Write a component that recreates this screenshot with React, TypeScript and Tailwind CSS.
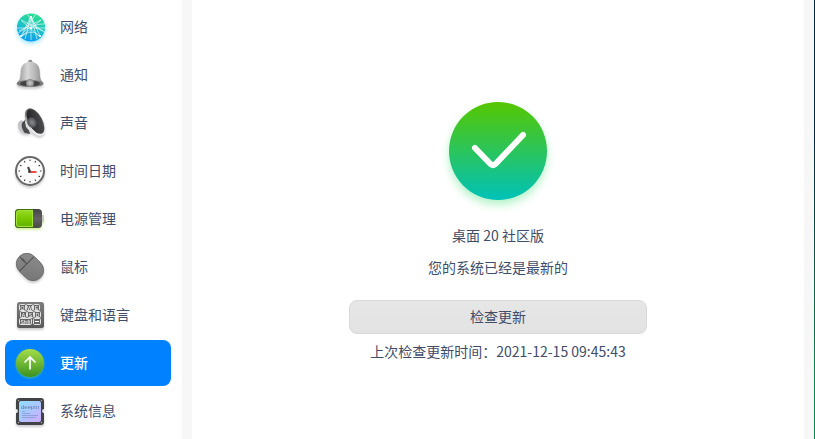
import { useState } from "react";
import type { ReactNode } from "react";

type IconProps = {
  children: ReactNode;
  shadow?: string;
};

const Icon = ({ children, shadow = "drop-shadow-[0_2px_1px_rgba(0,0,0,0.2)]" }: IconProps) => (
  <svg viewBox="0 0 32 32" className={`h-8 w-8 shrink-0 ${shadow}`} fill="none" aria-hidden="true">
    {children}
  </svg>
);

const NetworkIcon = () => (
  <Icon shadow="drop-shadow-[0_2px_2px_rgba(0,190,255,0.4)]">
    <defs>
      <linearGradient id="net" x1="0.7" y1="0" x2="0.4" y2="1">
        <stop offset="0" stopColor="#2fe08a" />
        <stop offset="0.5" stopColor="#1cc4c4" />
        <stop offset="1" stopColor="#0c9cf0" />
      </linearGradient>
      <clipPath id="net-clip">
        <circle cx="17" cy="16.5" r="14" />
      </clipPath>
    </defs>
    <circle cx="17" cy="16.5" r="14" fill="url(#net)" />
    <g clipPath="url(#net-clip)" stroke="#fff" strokeOpacity="0.75" strokeWidth="0.8">
      <path d="M3 17h28M17 5L7 26M17 5l9 20M17 5v24M7 9l19 17M27 9L7 26M5 20l22-11M7 9l22 11" />
      <path d="M11 28l6-23 6 23M22 3L12 17l-8 5M13 3l11 14 6 4" />
      <path d="M7 26c6-6 14-7 19 0M30 13C20 13 10 18 7 26" />
    </g>
    <g fill="#fff">
      <circle cx="17" cy="6" r="1" />
      <circle cx="17" cy="17" r="1" />
      <circle cx="7" cy="25" r="1" />
      <circle cx="26" cy="25" r="1" />
    </g>
  </Icon>
);

const BellIcon = () => (
  <Icon>
    <defs>
      <linearGradient id="bell" x1="0" y1="0" x2="1" y2="0">
        <stop offset="0" stopColor="#8d8d8d" />
        <stop offset="0.4" stopColor="#d8d8d8" />
        <stop offset="0.7" stopColor="#b5b5b5" />
        <stop offset="1" stopColor="#858585" />
      </linearGradient>
      <radialGradient id="clapper">
        <stop offset="0" stopColor="#d0d0d0" />
        <stop offset="1" stopColor="#858585" />
      </radialGradient>
    </defs>
    <circle cx="16.3" cy="3" r="2.2" fill="#8b8b8b" />
    <path
      d="M16.3 2.8c5.7 0 9.2 3.8 9.4 9.5.2 5 .6 8 2 9.6 1.3 1.1 2 1.7 1.8 3C28.8 27 22 28 16 28S3.2 27 2.7 24.9c-.2-1.3.6-1.9 1.9-3 1.6-1.6 2-4.6 2.2-9.6C7 6.6 10.6 2.8 16.3 2.8z"
      fill="url(#bell)"
    />
    <ellipse cx="16" cy="24.5" rx="13" ry="3.5" fill="#777" />
    <ellipse cx="16" cy="24.5" rx="10" ry="2.8" fill="#414141" />
    <circle cx="16" cy="24" r="4" fill="url(#clapper)" />
  </Icon>
);

const SpeakerIcon = () => (
  <Icon>
    <defs>
      <linearGradient id="cone" x1="0" y1="0" x2="1" y2="0.6">
        <stop offset="0" stopColor="#1d1d1f" />
        <stop offset="1" stopColor="#4d4d51" />
      </linearGradient>
      <linearGradient id="rim" x1="0" y1="0" x2="0" y2="1">
        <stop offset="0" stopColor="#5e5e5e" />
        <stop offset="0.5" stopColor="#d9d9d9" />
        <stop offset="1" stopColor="#f4f4f4" />
      </linearGradient>
      <radialGradient id="dome">
        <stop offset="0" stopColor="#8b8d90" />
        <stop offset="1" stopColor="#4c4d50" />
      </radialGradient>
    </defs>
    <ellipse cx="9" cy="20" rx="4.5" ry="7" transform="rotate(-25 9 20)" fill="#c4c4c8" />
    <path d="M8 16l4-4 4 15-5-1c-2-2-4-6-3-10z" fill="#4b4b4e" />
    <path d="M11 15l2-7 13 21c-6-1-11-5-14-9z" fill="#dedee0" />
    <ellipse cx="21" cy="15" rx="8" ry="15" transform="rotate(-29 21 15)" fill="url(#rim)" />
    <ellipse cx="21.5" cy="14.5" rx="6.8" ry="13.6" transform="rotate(-29 21.5 14.5)" fill="url(#cone)" />
    <ellipse cx="18" cy="15.5" rx="4.5" ry="5.5" transform="rotate(-29 18 15.5)" fill="url(#dome)" />
  </Icon>
);

const ticks = [0, 30, 60, 90, 120, 150, 180, 210, 240, 270, 300, 330];

const ClockIcon = () => (
  <Icon>
    <circle cx="16" cy="16" r="14" fill="#fcfcfc" stroke="#686868" strokeWidth="2" />
    {ticks.map((angle) => (
      <path key={angle} d="M16 4.5v1.6" stroke="#333" strokeWidth="1" transform={`rotate(${angle} 16 16)`} />
    ))}
    <path d="M14 12l2 4.5" stroke="#444" strokeWidth="2" />
    <path d="M16 17h6.5" stroke="#f04a45" strokeWidth="2" />
    <circle cx="15.5" cy="16.5" r="1.5" fill="#444" />
  </Icon>
);

const BatteryIcon = () => (
  <Icon shadow="drop-shadow-[0_2px_1px_rgba(130,210,0,0.35)]">
    <defs>
      <linearGradient id="charge" x1="0" y1="0" x2="0" y2="1">
        <stop offset="0" stopColor="#95d922" />
        <stop offset="0.5" stopColor="#79c800" />
        <stop offset="1" stopColor="#61b300" />
      </linearGradient>
      <linearGradient id="case" x1="0" y1="0" x2="0" y2="1">
        <stop offset="0" stopColor="#454545" />
        <stop offset="0.5" stopColor="#626262" />
        <stop offset="1" stopColor="#4a4a4a" />
      </linearGradient>
    </defs>
    <rect x="27" y="12" width="3" height="7" rx="1" fill="#c9c9c9" />
    <rect x="1" y="6" width="27" height="19" rx="4" fill="url(#case)" />
    <path d="M5 6h14v19H5a4 4 0 0 1-4-4V10a4 4 0 0 1 4-4z" fill="#3f6f10" />
    <path d="M5 7h14v17H5a3 3 0 0 1-3-3V10a3 3 0 0 1 3-3z" fill="#a4e239" />
    <path d="M5 8h13v15H5a2 2 0 0 1-2-2V10a2 2 0 0 1 2-2z" fill="url(#charge)" />
  </Icon>
);

const MouseIcon = () => (
  <Icon>
    <defs>
      <linearGradient id="mouse" x1="1" y1="0" x2="0" y2="1">
        <stop offset="0" stopColor="#8e8e8e" />
        <stop offset="1" stopColor="#747474" />
      </linearGradient>
    </defs>
    <g transform="rotate(-45 16 16)">
      <rect x="5.5" y="1" width="21" height="30" rx="10.5" fill="url(#mouse)" stroke="#626262" strokeWidth="0.8" />
      <path d="M6 11.5h20M16 1.500v10" stroke="#4c4c4c" strokeWidth="1" />
      <rect x="15" y="4.5" width="2" height="4.5" rx="1" fill="#555" />
    </g>
  </Icon>
);

const keys = [
  { label: "Q", x: 6, y: 5, width: 6 },
  { label: "W", x: 13, y: 5, width: 6 },
  { label: "E", x: 20, y: 5, width: 6 },
  { label: "A", x: 7, y: 12, width: 6 },
  { label: "S", x: 14, y: 12, width: 6 },
  { label: "D", x: 21, y: 12, width: 6 },
  { label: "Shift", x: 6, y: 19, width: 12 },
];

const KeyboardIcon = () => (
  <Icon>
    <defs>
      <linearGradient id="board" x1="0" y1="0" x2="0" y2="1">
        <stop offset="0" stopColor="#7d7d7d" />
        <stop offset="1" stopColor="#585858" />
      </linearGradient>
    </defs>
    <rect x="3" y="3" width="27" height="26" rx="2.5" fill="url(#board)" />
    {keys.map((key) => (
      <g key={key.label}>
        <rect x={key.x - 0.5} y={key.y + 0.5} width={key.width} height="6" rx="1" fill="#666" stroke="#f0f0f0" strokeWidth="0.9" />
        <text
          x={key.x - 0.5 + key.width / 2}
          y={key.y + 5.5}
          textAnchor="middle"
          fontSize="5"
          fill="#fff"
          fontFamily="Liberation Sans, sans-serif"
        >
          {key.label}
        </text>
      </g>
    ))}
    <rect x="19.5" y="19.5" width="7" height="6" rx="1" fill="#666" stroke="#f0f0f0" strokeWidth="0.9" />
    <path d="M21 22.5h4" stroke="#fff" strokeWidth="1" />
  </Icon>
);

const UpdateIcon = () => (
  <Icon shadow="drop-shadow-[0_1px_1px_rgba(120,230,60,0.6)]">
    <defs>
      <linearGradient id="update" x1="0" y1="0" x2="0" y2="1">
        <stop offset="0" stopColor="#a6dd4a" />
        <stop offset="1" stopColor="#3a9220" />
      </linearGradient>
    </defs>
    <circle cx="16" cy="16" r="14" fill="url(#update)" />
    <path d="M16 22.5V10M10.500 15.500L16 10l5.500 5.500" stroke="#fff" strokeWidth="1.7" />
  </Icon>
);

const SystemIcon = () => (
  <Icon>
    <defs>
      <linearGradient id="chip" x1="0" y1="0" x2="0.8" y2="1">
        <stop offset="0" stopColor="#8fdcff" />
        <stop offset="0.5" stopColor="#a9c8ff" />
        <stop offset="1" stopColor="#cbb0ff" />
      </linearGradient>
    </defs>
    <path
      d="M5 3h22a3 3 0 0 1 3 3v8a2 2 0 0 0 0 4v9a3 3 0 0 1-3 3H5a3 3 0 0 1-3-3v-9a2 2 0 0 0 0-4V6a3 3 0 0 1 3-3z"
      fill="#424347"
    />
    <g fill="#a5a5a8">
      <circle cx="4.5" cy="5.5" r="0.7" />
      <circle cx="27.5" cy="5.5" r="0.7" />
      <circle cx="4.5" cy="27.5" r="0.7" />
      <circle cx="27.5" cy="27.5" r="0.7" />
    </g>
    <rect x="5" y="6" width="22" height="21" rx="2" fill="url(#chip)" />
    <text x="16" y="13.5" textAnchor="middle" fontSize="6" fill="#63799c" fontFamily="Liberation Sans, sans-serif">
      deepin
    </text>
    <path d="M8 16.5h3M8 18.5h8M8 20.5h16M8 22.5h14" stroke="#7f93cc" strokeWidth="0.7" />
  </Icon>
);

const menuItems = [
  { id: "network", label: "网络", icon: <NetworkIcon /> },
  { id: "notification", label: "通知", icon: <BellIcon /> },
  { id: "sound", label: "声音", icon: <SpeakerIcon /> },
  { id: "datetime", label: "时间日期", icon: <ClockIcon /> },
  { id: "power", label: "电源管理", icon: <BatteryIcon /> },
  { id: "mouse", label: "鼠标", icon: <MouseIcon /> },
  { id: "keyboard", label: "键盘和语言", icon: <KeyboardIcon /> },
  { id: "update", label: "更新", icon: <UpdateIcon /> },
  { id: "system", label: "系统信息", icon: <SystemIcon /> },
];

const UpdatePanel = () => (
  <main className="flex flex-1 flex-col items-center bg-white px-4 pt-[102px]">
    <svg
      viewBox="0 0 98 98"
      className="h-[98px] w-[98px] drop-shadow-[0_5px_4px_rgba(40,220,100,0.35)]"
      fill="none"
      aria-hidden="true"
    >
      <defs>
        <linearGradient id="status" x1="0" y1="0" x2="0" y2="1">
          <stop offset="0" stopColor="#55c700" />
          <stop offset="1" stopColor="#00c2b8" />
        </linearGradient>
      </defs>
      <circle cx="49" cy="49" r="49" fill="url(#status)" />
      <path
        d="M26 46l15.5 16q2.5 2.5 5 0L74 33"
        stroke="#fff"
        strokeWidth="6"
        strokeLinecap="round"
        strokeLinejoin="round"
      />
    </svg>
    <h1 className="mt-[23px] leading-6">桌面 20 社区版</h1>
    <p className="mt-2 leading-6">您的系统已经是最新的</p>
    <button
      type="button"
      className="mt-[21px] h-[34px] w-full max-w-[298px] rounded-lg border border-[#d9d9d9] bg-gradient-to-b from-[#e6e6e6] to-[#e3e3e3] pb-0.5"
    >
      检查更新
    </button>
    <p className="mt-[5px] leading-6">上次检查更新时间：2021-12-15 09:45:43</p>
  </main>
);

const App = () => {
  const [active, setActive] = useState("update");

  return (
    <div className="flex min-h-screen bg-[#f7f7f7] font-['Noto_Sans_CJK_SC',sans-serif] text-sm text-[#414d68]">
      <nav className="flex w-[182px] shrink-0 flex-col gap-0.5 bg-white py-1 pr-[11px] pl-[5px]">
        {menuItems.map((item) => (
          <button
            key={item.id}
            type="button"
            onClick={() => setActive(item.id)}
            aria-current={active === item.id ? "page" : undefined}
            className={`flex h-[46px] shrink-0 items-center gap-3.5 rounded-lg pl-[9px] text-left ${
              active === item.id ? "bg-[#0081ff] font-medium text-white" : ""
            }`}
          >
            {item.icon}
            <span className="pb-0.5">{item.label}</span>
          </button>
        ))}
      </nav>
      <div className="w-2.5 shrink-0" />
      <UpdatePanel />
      <div className="w-2.5 shrink-0" />
      <div className="w-px shrink-0 bg-gradient-to-b from-[#00293d] from-30% to-[#008a4a] to-85%" />
    </div>
  );
};

export default App;
